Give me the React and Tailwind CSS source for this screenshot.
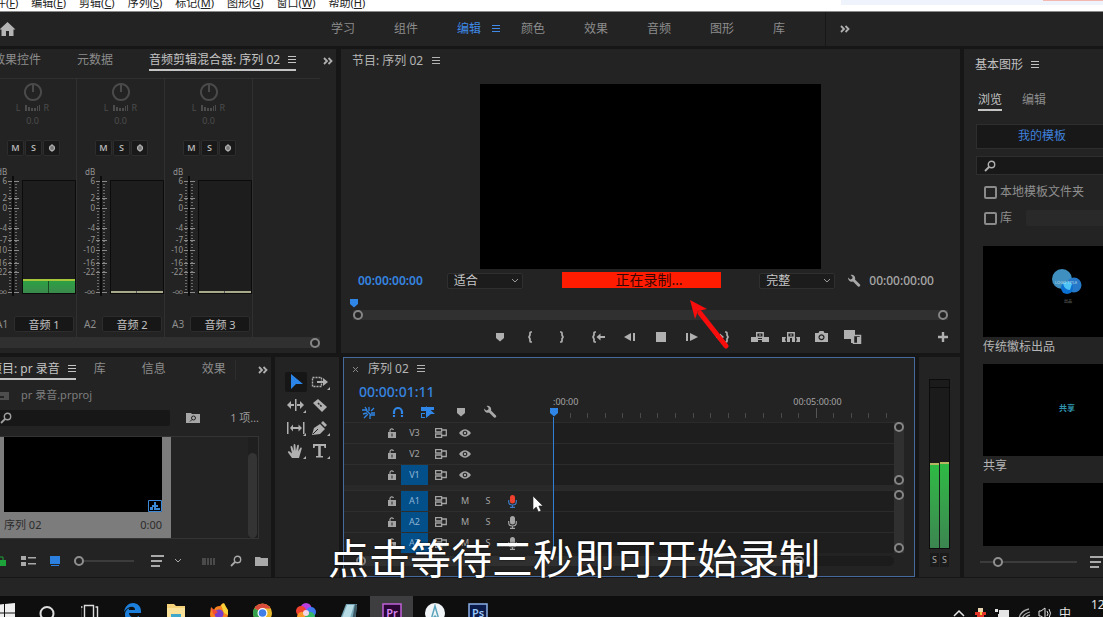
import React, { useState } from "react";

const menus = [
  ["文件", "F"],
  ["编辑", "E"],
  ["剪辑", "C"],
  ["序列", "S"],
  ["标记", "M"],
  ["图形", "G"],
  ["窗口", "W"],
  ["帮助", "H"],
];

const faderMarks = [
  ["6", 9],
  ["2", 26],
  ["0", 36],
  ["-4", 56],
  ["-7", 68],
  ["-10", 78],
  ["-16", 91],
  ["-22", 100],
  ["-∞", 120],
];

const channels = [
  { id: "A1", name: "音频 1", live: true },
  { id: "A2", name: "音频 2", live: false },
  { id: "A3", name: "音频 3", live: false },
];

function Icon({ w = 16, h = 16, children, className }) {
  return (
    <svg
      width={w}
      height={h}
      viewBox={`0 0 ${w} ${h}`}
      fill="currentColor"
      className={className || "shrink-0"}
      aria-hidden="true"
    >
      {children}
    </svg>
  );
}

function Burger() {
  return (
    <Icon w={8} h={8}>
      <path d="M0 0h8v1H0zM0 3h8v1H0zM0 6h8v1H0z" />
    </Icon>
  );
}

function More() {
  return (
    <Icon w={10} h={8}>
      <path d="M1 1l3 3-3 3M5.500 1l3 3-3 3" fill="none" stroke="currentColor" strokeWidth="1.800" />
    </Icon>
  );
}

function Search() {
  return (
    <Icon w={12} h={12}>
      <circle cx="7.500" cy="4.500" r="3.200" fill="none" stroke="currentColor" strokeWidth="1.400" />
      <path d="M5 7L1 11" stroke="currentColor" strokeWidth="1.800" />
    </Icon>
  );
}

function Wrench() {
  return (
    <Icon w={14} h={14}>
      <path d="M1 3.500L3.200 5.400 5.200 4.800 5.600 3 3.600 1C5.800.3 8 1.600 8.200 4.200L8 5.500l5 5c1 1.200-.8 3-2 2L6 7.400C3.500 8.400 1 6.600 1 3.500z" />
    </Icon>
  );
}

function Marker() {
  return (
    <Icon w={10} h={10}>
      <path d="M1 1h8v5L5 9.500 1 6z" />
    </Icon>
  );
}

function Ring() {
  return <span className="block size-[10px] shrink-0 rounded-full border-2 border-[#858585] bg-[#232323]" />;
}

function Lines() {
  return (
    <Icon w={13} h={12}>
      <path d="M0 0h13v2H0zM0 5h11v2H0zM0 10h9v2H0z" />
    </Icon>
  );
}

function Tab({ children, active }) {
  return (
    <button
      className={
        active
          ? "flex h-5 shrink-0 items-center gap-2 whitespace-nowrap border-b-2 border-[#c4c4c4] text-[#c4c4c4]"
          : "flex h-5 shrink-0 items-center whitespace-nowrap border-b-2 border-transparent text-[#8c8c8c]"
      }
    >
      {children}
    </button>
  );
}

function Slider({ label, value, className }) {
  const [val, setVal] = useState(value);
  return (
    <input
      type="range"
      aria-label={label}
      value={val}
      onChange={(e) => setVal(e.target.value)}
      className={
        "h-[10px] appearance-none bg-transparent [&::-webkit-slider-runnable-track]:h-[2px] [&::-webkit-slider-runnable-track]:bg-[#3c3c3c] [&::-webkit-slider-thumb]:mt-[-4px] [&::-webkit-slider-thumb]:size-[10px] [&::-webkit-slider-thumb]:appearance-none [&::-webkit-slider-thumb]:rounded-full [&::-webkit-slider-thumb]:border-2 [&::-webkit-slider-thumb]:border-[#8f8f8f] [&::-webkit-slider-thumb]:bg-[#232323] " +
        className
      }
    />
  );
}

function Dropdown({ label, value }) {
  return (
    <div className="grid h-4 w-[76px] items-center">
      <select
        aria-label={label}
        defaultValue={value}
        className="col-start-1 row-start-1 h-4 appearance-none rounded-xs border border-[#2f2f2f] bg-[#1c1c1c] px-1.5 text-[12px] leading-[14px] text-[#c8c8c8]"
      >
        <option>{value}</option>
      </select>
      <Icon w={8} h={6} className="pointer-events-none col-start-1 row-start-1 mr-1 justify-self-end text-[#999]">
        <path d="M1 1l3 3 3-3" fill="none" stroke="currentColor" />
      </Icon>
    </div>
  );
}

function MenuBar() {
  return (
    <header className="flex h-[11px] shrink-0 items-start justify-between overflow-hidden bg-white">
      <nav className="-ml-4 -mt-1 flex gap-[13px] text-[11px] leading-[14px] text-[#222]">
        {menus.map(([name, key]) => (
          <button key={key} className="whitespace-nowrap">
            {name}(<u>{key}</u>)
          </button>
        ))}
      </nav>
      <div className="flex h-[5px] w-[262px] justify-end bg-[#eff3fc]">
        <div className="h-px w-[60px] bg-[#f3b9b0]" />
      </div>
    </header>
  );
}

function WorkspaceBar() {
  const spaces = ["学习", "组件", "编辑", "颜色", "效果", "音频", "图形", "库"];
  return (
    <div className="mb-[3px] flex h-[35px] shrink-0 items-center border-t border-[#8a8a8a] bg-[#232323]">
      <button aria-label="主页" className="w-[331px] text-[#b4b4b4]">
        <Icon w={16} h={14}>
          <path d="M7.500 0l8 7.500h-2V14H9V9H6v5H1.500V7.500h-2z" />
        </Icon>
      </button>
      <nav className="flex h-full items-center">
        {spaces.map((s) => (
          <button
            key={s}
            className={
              s === "编辑"
                ? "flex w-16 shrink-0 items-center gap-[11px] text-left text-[#3f8ae8]"
                : "w-[63px] shrink-0 text-left text-[#8c8c8c]"
            }
          >
            {s}
            {s === "编辑" && <Burger />}
          </button>
        ))}
      </nav>
      <div className="-ml-[11px] flex h-full items-center border-l border-[#181818] pl-[14px] text-[#b0b0b0]">
        <button aria-label="更多工作区">
          <More />
        </button>
      </div>
    </div>
  );
}

function Fader() {
  const minor = [];
  for (let y = 12; y < 118; y += 3) minor.push(y);
  return (
    <svg width="33" height="126" className="shrink-0" aria-hidden="true">
      {minor.map((y) => (
        <path key={y} d={`M20 ${y + 0.5}h2M26 ${y + 0.5}h2`} stroke="#6c6c6c" />
      ))}
      {faderMarks.map(([t, y]) => (
        <g key={t}>
          <path d={`M19 ${y + 0.5}h11`} stroke="#8a8a8a" />
          <text x="18" y={y + 3} textAnchor="end" fontSize="8" fill="#949494">
            {t}
          </text>
        </g>
      ))}
      <path d="M24 4v120" stroke="#0c0c0c" strokeWidth="2" />
    </svg>
  );
}

function Channel({ id, name, live }) {
  return (
    <section className="flex w-[88px] shrink-0 flex-col items-center border-r border-[#303030] pt-1 text-[9px] leading-[12px]">
      <Icon w={18} h={18} className="text-[#4a4a4a]">
        <path d="M9 1v8M9 1a8 8 0 1 0 .01 0" fill="none" stroke="currentColor" strokeWidth="2" />
      </Icon>
      <div className="mt-px flex h-3 items-center gap-1 text-[#4c4c4c]">
        <span>L</span>
        <Icon w={15} h={6}>
          <path d="M0 0h2v6H0zM3 2h2v4H3zM6 3h2v3H6zM9 3h2v3H9zM12 1h1v5h-1zM14 0h1v6h-1z" />
        </Icon>
        <span>R</span>
      </div>
      <span className="mt-px text-[#4c4c4c]">0.0</span>
      <div className="ml-0.5 mt-[13px] flex gap-px font-semibold text-[#b4b4b4]">
        {["M", "S", "O"].map((b) => (
          <button key={b} className="flex h-4 w-[17px] items-center justify-center rounded-xs border border-[#2d2d2d] bg-[#191919]">
            {b === "O" ? (
              <Icon w={8} h={8}>
                <path d="M4 0v8" stroke="currentColor" />
                <circle cx="4" cy="4" r="2.500" fill="#777" stroke="currentColor" strokeWidth="1.200" />
              </Icon>
            ) : (
              b
            )}
          </button>
        ))}
      </div>
      <div className="mt-2.5 w-full pl-2 text-[8px] text-[#949494]">dB</div>
      <div className="-mt-1.5 flex w-full items-start">
        <Fader />
        <div className="mt-2 flex h-[114px] w-[54px] flex-col justify-end border border-[#0b0b0b] bg-[#1d1d1d]">
          {live ? (
            <div className="grid h-[14px] grid-cols-2 divide-x divide-[#1a4a24] border-t-2 border-[#a5c63a] bg-linear-to-b from-[#2ca043] to-[#3a8a4c]">
              <i />
              <i />
            </div>
          ) : (
            <div className="grid h-0.5 grid-cols-2 divide-x divide-[#555] bg-[#a9a98c]">
              <i />
              <i />
            </div>
          )}
        </div>
      </div>
      <div className="mt-[18px] flex w-full items-center justify-between pl-[7px] pr-0.5 text-[10px] text-[#8e8e8e]">
        {id}
        <input
          aria-label={id}
          defaultValue={name}
          className="h-4 w-[60px] rounded-xs border border-[#2d2d2d] bg-[#171717] text-center text-[11px] leading-[14px] text-[#c0c0c0]"
        />
      </div>
    </section>
  );
}

function Mixer() {
  return (
    <section className="flex w-[336px] shrink-0 flex-col overflow-hidden bg-[#232323]">
      <div className="flex h-[29px] shrink-0 items-start justify-between pr-[3px] pt-0.5 text-[12px]">
        <div className="-ml-[7px] flex gap-9">
          <Tab>效果控件</Tab>
          <Tab>元数据</Tab>
          <Tab active>
            音频剪辑混合器: 序列 02 <Burger />
          </Tab>
        </div>
        <button aria-label="更多面板" className="flex h-5 items-center text-[#b0b0b0]">
          <More />
        </button>
      </div>
      <div className="-ml-[11px] mr-4 flex flex-1 border-t border-[#303030]">
        {channels.map((c) => (
          <Channel key={c.id} {...c} />
        ))}
      </div>
      <div className="mb-[5px] mr-4 flex h-[11px] shrink-0 items-center justify-end bg-[#303030]">
        <Ring />
      </div>
    </section>
  );
}

function Brace({ right }) {
  return <path d={right ? "M1 1h1q1 0 1 1v2l1 2-1 2v2q0 1-1 1H1" : "M4 1H3q-1 0-1 1v2L1 6l1 2v2q0 1 1 1h1"} fill="none" stroke="currentColor" strokeWidth="1.700" />;
}

const transport = [
  [
    ["添加标记", <Marker />],
    ["标记入点", <Icon w={5} h={12}><Brace /></Icon>],
    ["标记出点", <Icon w={5} h={12}><Brace right /></Icon>],
  ],
  [
    ["转到入点", <Icon w={13} h={12}><Brace /><path d="M4.500 6l4-3.500V5H13v2H8.500v2.500z" /></Icon>],
    ["后退一帧", <Icon w={12} h={10}><path d="M0 5l7-4v8zM9 1h2v8H9z" /></Icon>],
    ["停止", <Icon w={10} h={10}><path d="M0 0h10v10H0z" /></Icon>],
    ["前进一帧", <Icon w={12} h={10}><path d="M12 5L4 1v8zM0 1h2v8H0z" /></Icon>],
    ["转到出点", <Icon w={13} h={12}><path d="M8 6L4 2.500V5H0v2h4v2.500z" /><g transform="translate(8 0)"><Brace right /></g></Icon>],
  ],
  [
    ["提升", <Icon w={18} h={12}><path d="M0 6h7v5H0zM11 6h7v5h-7zM7 8h4v1H7z" /><path d="M5.700 1.700h6.500v4.500H5.700z" fill="#232323" stroke="currentColor" strokeWidth="1.400" /><path d="M8 3.500h2v1H8z" /></Icon>],
    ["提取", <Icon w={18} h={12}><path d="M0 6h4l-1 2.500L4 11H0zM18 6h-4l1 2.500-1 2.500h4zM5 7h3v4H5zM10 7h3v4h-3z" /><path d="M5.700 1.700h6.500v4.500H5.700z" fill="#232323" stroke="currentColor" strokeWidth="1.400" /><path d="M8 3.500h2v1H8z" /></Icon>],
    ["导出帧", <Icon w={13} h={11}><path fillRule="evenodd" d="M0 2h3.500L4.500 0h4l1 2H13v9H0zM6.500 3.200a3 3 0 1 0 .01 0z" /><circle cx="6.500" cy="6.200" r="1.700" /></Icon>],
    ["比较视图", <Icon w={18} h={14}><path d="M0 0h11v9H0z" /><path d="M9.500 5.500h7v8h-7z" fill="#232323" stroke="currentColor" strokeWidth="1.500" /><path d="M7 9h3v4H7zM13 7h3v6h-3z" /></Icon>],
  ],
];

function Program() {
  return (
    <section className="relative flex min-w-0 flex-1 flex-col bg-[#232323]">
      <div className="flex h-[35px] shrink-0 items-center gap-[9px] pb-[11px] pl-[11px] text-[12px] text-[#b4b4b4]">
        节目: 序列 02 <Burger />
      </div>
      <div className="flex min-h-0 flex-1 justify-center">
        <div className="aspect-[342/186] h-full bg-black" />
      </div>
      <div className="flex h-6 shrink-0 items-center justify-between pl-[17px] pr-[26px] text-[12px]">
        <div className="flex items-center gap-6">
          <span className="font-semibold text-[#3584e0]">00:00:00:00</span>
          <Dropdown label="缩放级别" value="适合" />
        </div>
        <div className="mb-0.5 flex h-4 w-[159px] items-center justify-center bg-[#ff1c00] pl-4 text-[14px] text-[#3a0602]">
          正在录制…
        </div>
        <div className="flex items-center gap-3">
          <Dropdown label="回放分辨率" value="完整" />
          <span className="flex items-center gap-2 font-medium text-[#a8a8a8]">
            <Wrench />
            00:00:00:00
          </span>
        </div>
      </div>
      <div className="flex h-[17px] shrink-0 items-end pb-0.5 pl-2 text-[#2f86e6]">
        <Marker />
      </div>
      <div className="ml-3 mr-3 flex h-[10px] shrink-0 items-center justify-between bg-[#303030]">
        <Ring />
        <Ring />
      </div>
      <div className="flex h-[33px] shrink-0 items-center pl-[143px] pr-3 text-[#b0b0b0]">
        <div className="flex gap-1.5">
          {transport.map((group, i) => (
            <div key={i} className="flex">
              {group.map(([label, icon]) => (
                <button key={label} aria-label={label} className="flex w-[31px] items-center justify-center">
                  {icon}
                </button>
              ))}
            </div>
          ))}
        </div>
        <button aria-label="按钮编辑器" className="ml-auto">
          <Icon w={10} h={10}>
            <path d="M3.800 0h2.400v3.800H10v2.400H6.200V10H3.800V6.200H0V3.800h3.800z" />
          </Icon>
        </button>
      </div>
      {/* callout arrow pointing at the recording strip */}
      <svg width="44" height="54" className="absolute bottom-0 left-1/2 ml-9" aria-hidden="true">
        <path d="M13 14L39 47" stroke="#f80d0d" strokeWidth="5" strokeLinecap="round" />
        <path d="M3 1l17 9-9 2-3 8z" fill="#f80d0d" />
      </svg>
    </section>
  );
}

function Project() {
  return (
    <section className="flex w-[271px] shrink-0 flex-col overflow-hidden bg-[#232323]">
      <div className="flex h-[26px] shrink-0 items-center text-[12px]">
        <div className="-ml-[10px] flex w-[246px] shrink-0 items-center gap-[18px] border-r border-[#2d2d2d]">
          <Tab active>
            项目: pr 录音 <Burger />
          </Tab>
          <div className="flex gap-9">
            <Tab>库</Tab>
            <Tab>信息</Tab>
            <Tab>效果</Tab>
          </div>
        </div>
        <button aria-label="更多面板" className="ml-auto mr-[3px] text-[#b0b0b0]">
          <More />
        </button>
      </div>
      <div className="flex h-6 shrink-0 items-center gap-3 text-[11px] text-[#7d7d7d]">
        <Icon w={9} h={9}>
          <path d="M0 1h9v8H0z" fill="#4e4e4e" />
          <path d="M0 5h4v2H0z" fill="#232323" />
        </Icon>
        pr 录音.prproj
      </div>
      <div className="flex h-[29px] shrink-0 items-center pb-[7px] text-[12px] text-[#999]">
        <label className="flex h-4 w-[170px] items-center rounded-r-xs bg-[#171717] text-[#a0a0a0]">
          <Search />
          <input aria-label="搜索项目" className="h-4 w-full bg-transparent pl-1 outline-none" />
        </label>
        <button aria-label="新建搜索素材箱" className="ml-4 text-[#a6a6a6]">
          <Icon w={14} h={10}>
            <path d="M0 0h5l1 1h8v9H0z" />
            <circle cx="7.500" cy="5" r="2" fill="none" stroke="#232323" />
            <path d="M6 6.500L4 8.500" stroke="#232323" />
          </Icon>
        </button>
        <span className="ml-auto pr-3 text-[11px]">1 项…</span>
      </div>
      <div className="mr-3 flex h-[103px] shrink-0 justify-between border border-l-0 border-[#343434]">
        <div className="w-[171px] bg-[#7c7c7c] px-[4px]">
          <div className="mr-[5px] flex h-[75px] items-end justify-end bg-black text-[#3b8ad8]">
            <Icon w={14} h={12}>
              <path d="M.5.5h13v11H.5z" fill="none" stroke="currentColor" />
              <path d="M6 2h2v8H6zM2 7h3v3H2zM8 5h2v2H8zM8 8h4v2H8zM4 5h2v2H4z" />
            </Icon>
          </div>
          <div className="mr-[5px] flex h-[26px] items-center justify-between text-[11px] text-[#2c2c2c]">
            <span>序列 02</span>
            <span>0:00</span>
          </div>
        </div>
        <div className="flex w-[10px] items-end bg-[#1f1f1f]">
          <div className="h-[85px] w-[9px] rounded-full bg-[#343434]" />
        </div>
      </div>
      <div className="flex flex-1 items-center pr-[3px] pt-1.5 text-[#a9a9a9]">
        <Icon w={6} h={10}>
          <path d="M0 4h6v6H0z" fill="#1da33a" />
          <path d="M0 1h3v3" stroke="#1da33a" fill="none" />
        </Icon>
        <button aria-label="列表视图" className="ml-[15px]">
          <Icon w={15} h={10}>
            <path d="M0 0h5v4H0zM0 6h5v4H0zM7 1h8v1.500H7zM7 7h8v1.500H7z" />
          </Icon>
        </button>
        <button aria-label="图标视图" className="ml-3.5 text-[#2c80e0]">
          <Icon w={10} h={10}>
            <path d="M0 0h10v8H0zM1 9h8v1H1z" />
          </Icon>
        </button>
        <Slider label="缩略图大小" value={0} className="ml-3.5 w-[60px]" />
        <button aria-label="排序图标" className="ml-[17px]">
          <Lines />
        </button>
        <Icon w={8} h={6} className="ml-2.5 shrink-0">
          <path d="M1 1l3 3 3-3" fill="none" stroke="currentColor" />
        </Icon>
        <button aria-label="自动匹配序列" className="ml-auto text-[#4a4a4a]">
          <Icon w={13} h={7}>
            <path d="M0 0h4v7H0zM5 0h2v7H5zM8 0h2v7H8zM11 0h2v7h-2z" />
          </Icon>
        </button>
        <button aria-label="查找" className="ml-[15px]">
          <Search />
        </button>
        <button aria-label="新建素材箱" className="ml-[13px]">
          <Icon w={13} h={9}>
            <path d="M0 0h5l1 1h7v8H0z" />
          </Icon>
        </button>
      </div>
    </section>
  );
}

const tools = [
  ["选择工具", false, <path d="M4 0l12 10H9l-5 5z" fill="#2b84e8" />],
  ["向前选择轨道工具", true, <><path d="M1.500 3.500h9v9h-9z" fill="none" stroke="currentColor" strokeDasharray="2 1" strokeWidth="1.400" /><path d="M6 7h6V4l5 4-5 4V9H6z" /></>],
  ["波纹编辑工具", true, <path d="M8 2h1.500v12H8zM0 8l4-4v3h3v2H4v3zM17 8l-4-4v3h-3v2h3v3z" />],
  ["剃刀工具", false, <><path d="M2 6l5-4 9 8-5 5z" /><path d="M7 6l4 4" stroke="#232323" strokeWidth="1.500" strokeDasharray="2 1" /></>],
  ["外滑工具", true, <path d="M0 2h1.500v12H0zM16 2h1.500v12H16zM3 8l3-3.500V7h5.500V4.500L15 8l-3.500 3.500V9H6v2.500z" />],
  ["钢笔工具", true, <><path d="M1 15L3 8l6-4 5 5-5 5z" /><path d="M10 3l2-2 4 4-2 2z" /><path d="M2 14l5-5" stroke="#232323" /></>],
  ["手形工具", true, <path d="M5 15L1 9.500c-.6-1 .8-1.900 1.600-1L5 10.500 3.500 4c-.2-1.200 1.400-1.600 1.700-.4L6.700 8 6.600 2c0-1.200 1.700-1.200 1.800 0l.5 6 1.300-5.500c.3-1.200 1.900-.8 1.700.4L11.200 8.500l2-3.600c.6-1 2-.2 1.500.8L12 15z" />],
  ["文字工具", true, <path d="M2 1h13v4h-1.500L13 3H9.800v10H12v1.500H5V13h2.200V3H4l-.5 2H2z" />],
];

function Tools() {
  return (
    <section className="w-16 shrink-0 bg-[#232323] px-2.5 pt-[15px]">
      <div className="grid grid-cols-2 gap-x-[3px] gap-y-[3px]">
        {tools.map(([label, more, shape], i) => (
          <button
            key={label}
            aria-label={label}
            className={
              i === 0
                ? "flex h-5 w-[22px] items-center justify-center rounded-xs bg-[#161616]"
                : "flex h-5 w-[22px] items-center justify-center text-[#b0b0b0]"
            }
          >
            <Icon w={22} h={20}>
              <g transform="translate(2 2)">{shape}</g>
              {more && <path d="M21 15v3h-3z" />}
            </Icon>
          </button>
        ))}
      </div>
    </section>
  );
}

function Mic({ on }) {
  return (
    <Icon w={9} h={13}>
      <rect x="2" y="0" width="5" height="8.500" rx="2.500" fill={on ? "#f0402e" : "currentColor"} />
      <path d="M.7 5v2a3.800 3 0 0 0 7.600 0V5M4.500 10v2M2 12.300h5" fill="none" stroke={on ? "#3d78c0" : "currentColor"} strokeWidth="1.200" />
    </Icon>
  );
}

function TrackHead({ id, on, rec }) {
  return (
    <div className="flex h-[21px] items-center border-t border-[#2e2e2e] bg-[#242424] pl-11 text-[9px] text-[#a4a4a4]">
      <button aria-label={"锁定 " + id} className="mr-[5px]">
        <Icon w={8} h={10}>
          <path fillRule="evenodd" d="M0 4h8v6H0zM3.500 5.500v3h1v-3z" />
          <path d="M2 4V2.500a1.800 1.800 0 0 1 3.500-.5" fill="none" stroke="currentColor" strokeWidth="1.200" />
        </Icon>
      </button>
      <button
        className={
          on
            ? "h-full w-[27px] bg-[#024f8a] text-[#8fb4d4]"
            : "h-full w-[27px]"
        }
      >
        {id}
      </button>
      <button aria-label={"同步锁定 " + id} className="flex w-[26px] justify-center">
        <Icon w={12} h={10}>
          <path d="M.6.6h6v3.400h-6zM.6 6h6v3.400h-6zM7 2h4.300v5.500H7" fill="none" stroke="currentColor" strokeWidth="1.300" />
        </Icon>
      </button>
      {id[0] === "V" ? (
        <button aria-label={"切换轨道输出 " + id} className="flex w-[22px] justify-center">
          <Icon w={12} h={8}>
            <path fillRule="evenodd" d="M0 4q6-7.500 12 0-6 7.500-12 0zM6 1.700a2.300 2.300 0 1 0 .01 0z" />
            <circle cx="6" cy="4" r="1.200" />
          </Icon>
        </button>
      ) : (
        <>
          <button className="w-[22px]">M</button>
          <button className="w-6">S</button>
          <button aria-label={"画外音录制 " + id} className="flex w-6 justify-center">
            <Mic on={rec} />
          </button>
        </>
      )}
    </div>
  );
}

function TrackGroup({ tracks }) {
  return (
    <div className="flex">
      <div className="w-[209px] shrink-0">
        {tracks.map((t) => (
          <TrackHead key={t.id} {...t} />
        ))}
      </div>
      <div className="flex-1 bg-[#1e1e1e]">
        {tracks.map((t) => (
          <div key={t.id} className="h-[21px] border-t border-[#2b2b2b]" />
        ))}
      </div>
      <div className="mr-2.5 flex w-[10px] flex-col justify-between bg-[#303030]">
        <Ring />
        <Ring />
      </div>
    </div>
  );
}

function Timeline() {
  return (
    <section className="relative flex min-w-0 flex-1 flex-col border border-[#476a9e] bg-[#232323]">
      <div className="flex h-[22px] shrink-0 items-center text-[12px] text-[#b4b4b4]">
        <button aria-label="关闭序列" className="ml-[9px] mr-2.5">
          <Icon w={5} h={5}>
            <path d="M0 0l5 5M5 0L0 5" stroke="#888" />
          </Icon>
        </button>
        序列 02
        <span className="ml-2">
          <Burger />
        </span>
      </div>
      <div className="flex h-[42px] shrink-0">
        <div className="w-[209px] shrink-0 pl-[15px]">
          <div className="flex h-6 items-center text-[14px] font-medium text-[#3584e0]">00:00:01:11</div>
          <div className="flex h-4 items-center gap-[17px] pl-[3px] text-[#2f86e6]">
            <button aria-label="嵌套序列">
              <Icon w={13} h={13}>
                <path d="M0 4h4l5 5h4M3 1l2 3M1 8l4-1M2 12l4-4M7 1v4M9 5l3-3M9 7h4M8 9v4" fill="none" stroke="currentColor" strokeWidth="1.300" />
              </Icon>
            </button>
            <button aria-label="对齐">
              <Icon w={12} h={12}>
                <path d="M2 11V6a4 4 0 0 1 8 0v5" fill="none" stroke="currentColor" strokeWidth="2.200" />
                <path d="M0 8.500h12" stroke="#232323" />
              </Icon>
            </button>
            <button aria-label="链接选择项">
              <Icon w={14} h={12}>
                <path d="M0 1h5v4H0zM6 1h7v3H6zM0 7h4v1H0zM0 7h1v5H0zM0 11h4v1H0z" />
                <path d="M5 0l9 8h-4l-5 4z" />
              </Icon>
            </button>
            <span className="flex items-center gap-[17px] pl-1 text-[#a9a9a9]">
              <button aria-label="添加标记">
                <Marker />
              </button>
              <button aria-label="时间轴显示设置">
                <Wrench />
              </button>
            </span>
          </div>
        </div>
        {/* time ruler */}
        <div className="flex flex-1 items-end pb-1 pr-[27px] text-[9px] leading-[12px] text-[#a4a4a4]">
          {Array.from({ length: 19 }, (_, i) => (
            <div
              key={i}
              className={
                i === 14
                  ? "relative h-2.5 flex-1 border-r border-[#555]"
                  : "relative h-[5px] flex-1 border-r border-[#4a4a4a]"
              }
            >
              {i === 0 && <span className="absolute -top-[17px] left-0">:00:00</span>}
              {i === 14 && <span className="absolute -right-[26px] -top-3">00:05:00:00</span>}
            </div>
          ))}
        </div>
      </div>
      <TrackGroup tracks={[{ id: "V3" }, { id: "V2" }, { id: "V1", on: true }]} />
      <div className="mr-2.5 h-[5px] bg-[#292929]" />
      <TrackGroup
        tracks={[
          { id: "A1", on: true, rec: true },
          { id: "A2", on: true },
          { id: "A3", on: true },
        ]}
      />
      <div className="ml-3 mr-5 mt-[3px] flex h-[10px] rounded-full bg-[#1c1c1c]">
        <div className="flex w-5/6 items-center justify-between rounded-full bg-[#303030]">
          <Ring />
          <Ring />
        </div>
      </div>
      {/* playhead */}
      <div className="absolute left-[204px] top-[49px] flex w-[11px] flex-col items-center text-[#2f86e6]">
        <Marker />
        <div className="h-[137px] w-px bg-[#2f7fd6]" />
      </div>
      {/* mouse pointer */}
      <svg width="12" height="18" className="absolute left-[188px] top-[137px]" aria-hidden="true">
        <path d="M1 1v14l3.200-3 2.300 5 2.500-1.200L6.800 11H11z" fill="#fff" stroke="#222" strokeWidth=".6" />
      </svg>
    </section>
  );
}

function Meters() {
  return (
    <section className="flex w-[41px] shrink-0 flex-col items-center bg-[#232323] pt-[22px] text-[9px] text-[#a4a4a4]">
      <div className="grid h-[170px] w-[21px] grid-cols-2 items-end gap-px border border-[#0c0c0c] bg-[#1b1b1b]">
        <div className="col-span-2 h-2 self-start border-b border-[#0c0c0c]" />
        <div className="h-[85px] border-t-2 border-[#b6b660] bg-linear-to-b from-[#2dbb43] to-[#3b8550]" />
        <div className="h-[86px] border-t-2 border-[#b6b660] bg-linear-to-b from-[#2dbb43] to-[#3b8550]" />
      </div>
      <div className="mt-1 flex gap-px">
        <button className="h-3.5 w-[9px] bg-[#1a1a1a] leading-[14px]">S</button>
        <button className="h-3.5 w-[9px] bg-[#1a1a1a] leading-[14px]">S</button>
      </div>
    </section>
  );
}

function Check({ label }) {
  return (
    <label className="flex h-[26px] items-center gap-[3px] whitespace-nowrap text-[#8e8e8e]">
      <input type="checkbox" className="size-[13px] shrink-0 appearance-none rounded-xs border-2 border-[#8a8a8a]" />
      {label}
    </label>
  );
}

function Graphics() {
  return (
    <aside className="flex w-[139px] shrink-0 flex-col overflow-hidden bg-[#232323] text-[12px]">
      <h2 className="flex h-8 shrink-0 items-center gap-2 pl-[11px] text-[#c0c0c0]">
        基本图形 <Burger />
      </h2>
      <div className="flex h-[43px] shrink-0 gap-5 pl-3.5 pt-[10px]">
        <Tab active>浏览</Tab>
        <Tab>编辑</Tab>
      </div>
      <button className="ml-3 h-[25px] w-[132px] shrink-0 border border-[#2e2e2e] bg-[#181818] pb-px text-[#3f80dc]">
        我的模板
      </button>
      <label className="ml-3 mt-[7px] flex h-[19px] w-[132px] shrink-0 items-center gap-1 border border-[#2e2e2e] bg-[#181818] pl-[7px] text-[#b0b0b0]">
        <Search />
        <input aria-label="搜索模板" className="w-full bg-transparent outline-none" />
      </label>
      <div className="mt-1 shrink-0 pl-5">
        <Check label="本地模板文件夹" />
        <div className="flex items-center gap-[14px]">
          <Check label="库" />
          <select aria-label="库" className="h-4 flex-1 appearance-none rounded-l-xs bg-[#292929]" />
        </div>
      </div>
      <div className="mt-[15px] flex min-h-0 flex-1 flex-col overflow-hidden pl-[19px] text-[#b4b4b4]">
        <div className="h-[91px] w-[168px] shrink-0 bg-black">
          <svg width="168" height="91" aria-hidden="true">
            <circle cx="79" cy="33" r="10" fill="#3f8fc0" />
            <circle cx="91" cy="39" r="7.500" fill="#2678c8" />
            <circle cx="84" cy="42" r="6" fill="#0a6fd0" />
            <path d="M80 37q7-3 9 1l-2 6q-6 0-7-7z" fill="#4cc3f4" />
            <text x="72" y="38" fontSize="4" fill="#b8dcec">LOGO TITLE</text>
            <text x="81" y="57" fontSize="4" fill="#777">出品</text>
          </svg>
        </div>
        <p className="h-[27px] shrink-0 pb-[7px] leading-5">传统徽标出品</p>
        <div className="flex h-[92px] w-[168px] shrink-0 items-center justify-center bg-black pb-1 text-[8px] font-bold text-[#2f93ad]">
          共享
        </div>
        <p className="h-[27px] shrink-0 pb-[7px] leading-5">共享</p>
        <div className="h-[92px] w-[168px] shrink bg-black" />
      </div>
      <div className="flex h-[31px] shrink-0 items-center pl-4 text-[#a9a9a9]">
        <Slider label="缩放" value={15} className="w-[97px] shrink-0" />
        <button aria-label="排序" className="ml-[13px] shrink-0">
          <Lines />
        </button>
      </div>
    </aside>
  );
}

const apps = [
  ["开始", <path d="M0 2l9-1v8.500H0zM10 1l10-1v9.500H10zM0 10.500h9V19l-9-1zM10 10.500h10V20l-10-1z" fill="#eee" />],
  ["搜索", <circle cx="9" cy="10.500" r="6.500" fill="none" stroke="#ddd" strokeWidth="2" />],
  ["任务视图", <path d="M3.500 2.500h9v15h-9zM1.500 4H-.5v12h2M14.500 4h2v12h-2" fill="none" stroke="#ddd" strokeWidth="1.400" />],
  ["Edge", <path d="M0 9C1 3 5 0 9 0c5 0 8 4 8 8v2H5c0 4 5 6 10 3v4C8 21 1 18 1 12c0-4 2-6 5-7-1 1-1 1-1 2h6c0-4-6-5-11 2z" fill="#1c7fdc" />],
  ["资源管理器", <><path d="M0 1h7l2 2h9v15H0z" fill="#f5d27a" /><path d="M0 5h18v13H0z" fill="#fbe29b" /><path d="M4 11h10v7H4z" fill="#3fa7c9" /></>],
  ["Firefox", <><path d="M0 11L1 4l3 3q1-4 6-4l3-3q2 2 2 4 3 3 3 7a9 9 0 0 1-18 0z" fill="#f8801f" /><path d="M11 2l3-2q2 4 4 7v5l-4-2z" fill="#fbd13a" /><circle cx="9" cy="11" r="4.500" fill="#7a3fc8" /><path d="M1 5l4 2 3 2-4 3z" fill="#f04a3c" /></>],
  ["Chrome", <><circle cx="9.500" cy="10" r="9.500" fill="#e8b92e" /><path d="M9.500 10L1.300 5.200A9.500 9.500 0 0 1 17.700 5.500H9.500z" fill="#d94b3c" /><path d="M9.500 10L1.300 5.200A9.500 9.500 0 0 0 9.500 19.500z" fill="#34a04c" /><circle cx="9.500" cy="10" r="5" fill="#fff" /><circle cx="9.500" cy="10" r="3.800" fill="#3f7ee8" /></>],
  ["相册", <><circle cx="10" cy="5.500" r="5.500" fill="#b83fe0" /><circle cx="15" cy="9" r="5" fill="#3f7af0" /><circle cx="5" cy="8" r="5" fill="#f0402e" /><circle cx="6" cy="14" r="5" fill="#f89a2a" /><circle cx="14" cy="14" r="5" fill="#35b86a" /><circle cx="10" cy="10" r="3" fill="#f3d6e6" /></>],
  ["记事本", <><path d="M7 1h11l-2 18H0z" fill="#78a9b8" /><path d="M8 2h7L10 18H2z" fill="#b7dbe4" /><path d="M16 1l2 1-2 17-3-1z" fill="#3d5a66" /></>],
  ["Premiere", <><path d="M1 1h18v19H1z" fill="#2a0634" stroke="#c060d8" strokeWidth="1.500" /><text x="10" y="14" textAnchor="middle" fontSize="11" fontWeight="600" fill="#d884f0">Pr</text></>],
  ["绘图", <><circle cx="10" cy="10" r="10" fill="#f1f5f7" /><path d="M10 3l4 14-4-4-4 4z" fill="none" stroke="#5aa4bc" strokeWidth="1.500" /></>],
  ["Photoshop", <><path d="M1 1h18v19H1z" fill="#0a1a4a" stroke="#8ab0e8" strokeWidth="1.500" /><text x="10" y="14" textAnchor="middle" fontSize="11" fontWeight="600" fill="#9cc8f8">Ps</text></>],
];

function Taskbar() {
  return (
    <footer className="flex h-[21px] shrink-0 justify-between overflow-hidden bg-[#0e0e0e]">
      <div className="-ml-[17px] flex">
        {apps.map(([label, shape]) => (
          <button
            key={label}
            aria-label={label}
            className={
              label === "Premiere"
                ? "flex w-[43px] justify-center bg-[#3e3e40] pt-[7px]"
                : "flex w-[43px] justify-center pt-[7px]"
            }
          >
            <Icon w={20} h={20}>{shape}</Icon>
          </button>
        ))}
      </div>
      <div className="flex gap-[7px] pt-[11px] text-[12px] leading-[14px] text-[#e4e4e4]">
        <Icon w={14} h={12}>
          <path d="M2 9l5-5 5 5" fill="none" stroke="currentColor" strokeWidth="1.500" />
        </Icon>
        <Icon w={14} h={12}>
          <path d="M5 1h5v4H5z" fill="#e8d7b0" />
          <path d="M2 5h11v3H2zM4 8h7v4H4z" fill="#e5352b" />
          <path d="M7 5h2v3H7z" fill="#f8c83c" />
        </Icon>
        <Icon w={16} h={12}>
          <path d="M1 2h3v3H1zM5 3h10v8H4V7h1z" />
        </Icon>
        <Icon w={14} h={12}>
          <path d="M2 12Q3 4 12 2M5 12q1-5 8-7M8 12q1-3 5-4" fill="none" stroke="#aaa" strokeWidth="1.300" />
        </Icon>
        <Icon w={14} h={12}>
          <path d="M1 4h2l4-3v11L3 9H1zM9 4q2 3 0 5M11 2q3 4 0 9" fill="none" stroke="currentColor" />
        </Icon>
        <span>中</span>
        <span className="ml-[13px] mt-[-9px] w-3">12</span>
      </div>
    </footer>
  );
}

export default function App() {
  return (
    <div className="relative flex h-screen min-h-[617px] flex-col overflow-hidden bg-[#161616] font-['Noto_Sans','Noto_Sans_CJK_SC',sans-serif] text-[12px] leading-[16px]">
      <MenuBar />
      <WorkspaceBar />
      <main className="flex min-h-0 flex-1 gap-1">
        <div className="flex min-w-0 flex-1 flex-col gap-1">
          <div className="flex min-h-0 flex-1 gap-[5px]">
            <Mixer />
            <Program />
          </div>
          <div className="flex h-[220px] shrink-0 gap-1">
            <Project />
            <Tools />
            <Timeline />
            <Meters />
          </div>
        </div>
        <Graphics />
      </main>
      <div className="mt-px h-[18px] shrink-0 bg-[#252525]" />
      <Taskbar />
      {/* subtitle burned over the interface */}
      <p className="pointer-events-none absolute bottom-[29px] left-[328px] whitespace-nowrap text-[41px] font-normal leading-[60px] text-white [text-shadow:0_0_2px_#000]">
        点击等待三秒即可开始录制
      </p>
    </div>
  );
}
